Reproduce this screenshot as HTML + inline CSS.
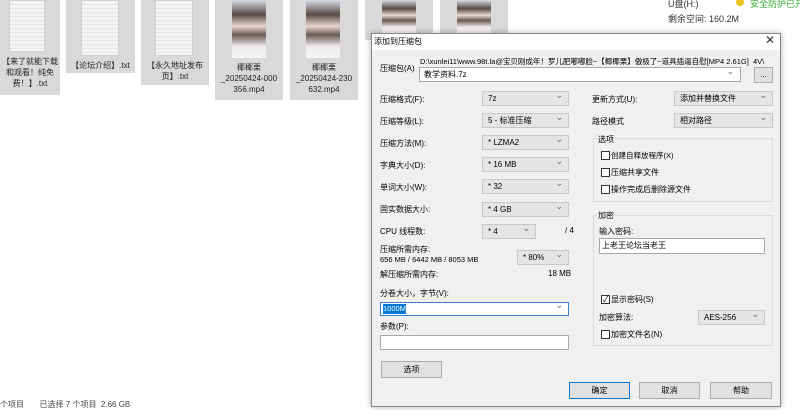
<!DOCTYPE html>
<html><head><meta charset="utf-8"><style>
*{box-sizing:border-box;margin:0;padding:0}
body{width:800px;height:408px;overflow:hidden;background:#fff;position:relative;font-family:"Liberation Sans","Noto Sans CJK SC",sans-serif;font-size:8px;color:#000}
.a{position:absolute;white-space:nowrap}
.tile{position:absolute;background:#d9d9d9;top:0}
.doc{position:absolute;background:repeating-linear-gradient(#f4f4f4 0 3px,#e6e6e6 3px 4px);border:1px solid #d0d0d0}
.cap{position:absolute;left:0;right:0;text-align:center;font-size:8px;line-height:11px;color:#222}
.ph{position:absolute;background:linear-gradient(#d8dde8,#5a4a46 25%,#e9d6d0 45%,#6a5a56 60%,#f0ecee 80%,#f6f4f4)}
.cb{position:absolute;background:#e5e5e5;border:1px solid #c8c8c8;height:15px;font-size:8px;line-height:13px;padding-left:5px}
.cb::after{content:"⌄";position:absolute;right:5px;top:-3px;color:#666;font-size:9px}
.in{position:absolute;background:#fff;border:1px solid #a8a8a8}
.btn{position:absolute;background:#e1e1e1;border:1px solid #adadad;text-align:center;font-size:8px;line-height:15px}
.chk{position:absolute;width:9px;height:9px;border:1px solid #333;background:#fff}
.grp{position:absolute;border:1px solid #dcdcdc}
</style></head><body>
<div class="tile" style="left:0;width:60px;height:95px"><div class="doc" style="left:9px;top:0;width:36px;height:52px"></div><div class="cap" style="top:56px">【来了就能下载<br>和观看！纯免<br>费！】.txt</div></div>
<div class="tile" style="left:66px;width:69px;height:73px"><div class="doc" style="left:15px;top:0;width:38px;height:56px"></div><div class="cap" style="top:60px">【论坛介绍】.txt</div></div>
<div class="tile" style="left:141px;width:68px;height:85px"><div class="doc" style="left:14px;top:0;width:38px;height:56px"></div><div class="cap" style="top:60px">【永久地址发布<br>页】.txt</div></div>
<div class="tile" style="left:215px;width:68px;height:100px"><div class="ph" style="left:17px;top:0;width:34px;height:58px"></div><div class="cap" style="top:62px">椰椰栗<br>_20250424-000<br>356.mp4</div></div>
<div class="tile" style="left:290px;width:68px;height:100px"><div class="ph" style="left:16px;top:0;width:34px;height:58px"></div><div class="cap" style="top:62px">椰椰栗<br>_20250424-230<br>632.mp4</div></div>
<div class="tile" style="left:365px;width:68px;height:40px"><div class="ph" style="left:17px;top:0;width:34px;height:34px"></div></div>
<div class="tile" style="left:440px;width:68px;height:40px"><div class="ph" style="left:17px;top:0;width:34px;height:34px"></div></div>
<div class="a" style="left:668px;top:-3px;font-size:9px;color:#333">U盘(H:)</div>
<div class="a" style="left:736px;top:-2px;width:8px;height:8px;border-radius:50%;background:#e8c020"></div>
<div class="a" style="left:750px;top:-3px;font-size:9px;color:#3a3">安全防护已开</div>
<div class="a" style="left:668px;top:12px;font-size:9px;color:#333">剩余空间: 160.2M</div>
<div class="a" style="left:0;top:399px;font-size:8px;color:#444">个项目&nbsp;&nbsp;&nbsp;&nbsp;&nbsp;&nbsp;&nbsp;已选择 7 个项目&nbsp;&nbsp;2.66 GB</div>

<div class="a" style="left:371px;top:33px;width:410px;height:374px;background:#f0f0f0;border:1px solid #888;box-shadow:0 0 6px rgba(0,0,0,.3)">
<div class="a" style="left:0;top:0;width:408px;height:16px;background:#fff"></div>
</div>
<div class="a" style="left:374px;top:36px;font-size:8px">添加到压缩包</div>
<div class="a" style="left:765px;top:33px;font-size:12px;color:#333">✕</div>
<div class="a" style="left:380px;top:63px">压缩包(A)</div>
<div class="a" style="left:420px;top:56px;font-size:7.5px">D:\xunlei11\www.98t.la@宝贝刚成年！罗儿肥嘟嘟脸~【椰椰栗】傲极了~道具插逼自慰[MP4 2.61G]&nbsp;&nbsp;4V\</div>
<div class="in" style="left:419px;top:67px;width:322px;height:15px;padding-left:4px;line-height:13px">教学资料.7z<span style="position:absolute;right:6px;top:-3px;color:#666;font-size:9px">⌄</span></div>
<div class="btn" style="left:754px;top:67px;width:19px;height:16px;line-height:14px">...</div>

<div class="a" style="left:380px;top:94px">压缩格式(F):</div><div class="cb" style="left:482px;top:91px;width:87px">7z</div>
<div class="a" style="left:380px;top:116px">压缩等级(L):</div><div class="cb" style="left:482px;top:113px;width:87px">5 - 标准压缩</div>
<div class="a" style="left:380px;top:138px">压缩方法(M):</div><div class="cb" style="left:482px;top:135px;width:87px">* LZMA2</div>
<div class="a" style="left:380px;top:160px">字典大小(D):</div><div class="cb" style="left:482px;top:157px;width:87px">* 16 MB</div>
<div class="a" style="left:380px;top:182px">单词大小(W):</div><div class="cb" style="left:482px;top:179px;width:87px">* 32</div>
<div class="a" style="left:380px;top:204px">固实数据大小:</div><div class="cb" style="left:482px;top:202px;width:87px">* 4 GB</div>
<div class="a" style="left:380px;top:226px">CPU 线程数:</div><div class="cb" style="left:482px;top:224px;width:54px">* 4</div><div class="a" style="left:565px;top:226px">/ 4</div>
<div class="a" style="left:380px;top:244px">压缩所需内存:</div><div class="a" style="left:380px;top:255px;font-size:7.5px">656 MB / 6442 MB / 8053 MB</div><div class="cb" style="left:517px;top:250px;width:52px">* 80%</div>
<div class="a" style="left:380px;top:269px">解压缩所需内存:</div><div class="a" style="left:548px;top:269px">18 MB</div>
<div class="a" style="left:380px;top:288px">分卷大小，字节(V):</div>
<div class="in" style="left:380px;top:302px;width:189px;height:14px;border-color:#3c7fd0"><span style="position:absolute;left:2px;top:1px;background:#0078d7;color:#fff;line-height:10px;font-size:7.5px">1000M</span><span style="position:absolute;right:5px;top:-3px;color:#666;font-size:9px">⌄</span></div>
<div class="a" style="left:380px;top:321px">参数(P):</div>
<div class="in" style="left:380px;top:335px;width:189px;height:15px"></div>
<div class="btn" style="left:381px;top:361px;width:61px;height:17px">选项</div>

<div class="a" style="left:592px;top:94px">更新方式(U):</div><div class="cb" style="left:674px;top:91px;width:99px">添加并替换文件</div>
<div class="a" style="left:592px;top:116px">路径模式</div><div class="cb" style="left:674px;top:113px;width:99px">相对路径</div>
<div class="grp" style="left:593px;top:138px;width:180px;height:64px"></div>
<div class="a" style="left:597px;top:134px;background:#f0f0f0;padding:0 1px">选项</div>
<div class="chk" style="left:601px;top:151px"></div><div class="a" style="left:611px;top:150px;font-size:7.5px">创建自释放程序(X)</div>
<div class="chk" style="left:601px;top:168px"></div><div class="a" style="left:611px;top:167px">压缩共享文件</div>
<div class="chk" style="left:601px;top:185px"></div><div class="a" style="left:611px;top:184px">操作完成后删除源文件</div>
<div class="grp" style="left:593px;top:215px;width:180px;height:131px"></div>
<div class="a" style="left:597px;top:210px;background:#f0f0f0;padding:0 1px">加密</div>
<div class="a" style="left:599px;top:226px">输入密码:</div>
<div class="in" style="left:599px;top:238px;width:166px;height:16px;padding-left:2px;line-height:14px">上老王论坛当老王</div>
<div class="chk" style="left:601px;top:295px;font-size:8px;line-height:7px;text-align:center">✓</div><div class="a" style="left:611px;top:294px">显示密码(S)</div>
<div class="a" style="left:599px;top:312px">加密算法:</div><div class="cb" style="left:698px;top:310px;width:67px">AES-256</div>
<div class="chk" style="left:601px;top:330px"></div><div class="a" style="left:611px;top:329px">加密文件名(N)</div>

<div class="btn" style="left:569px;top:382px;width:61px;height:17px;border:1px solid #0078d7">确定</div>
<div class="btn" style="left:639px;top:382px;width:61px;height:17px">取消</div>
<div class="btn" style="left:710px;top:382px;width:62px;height:17px">帮助</div>
</body></html>
